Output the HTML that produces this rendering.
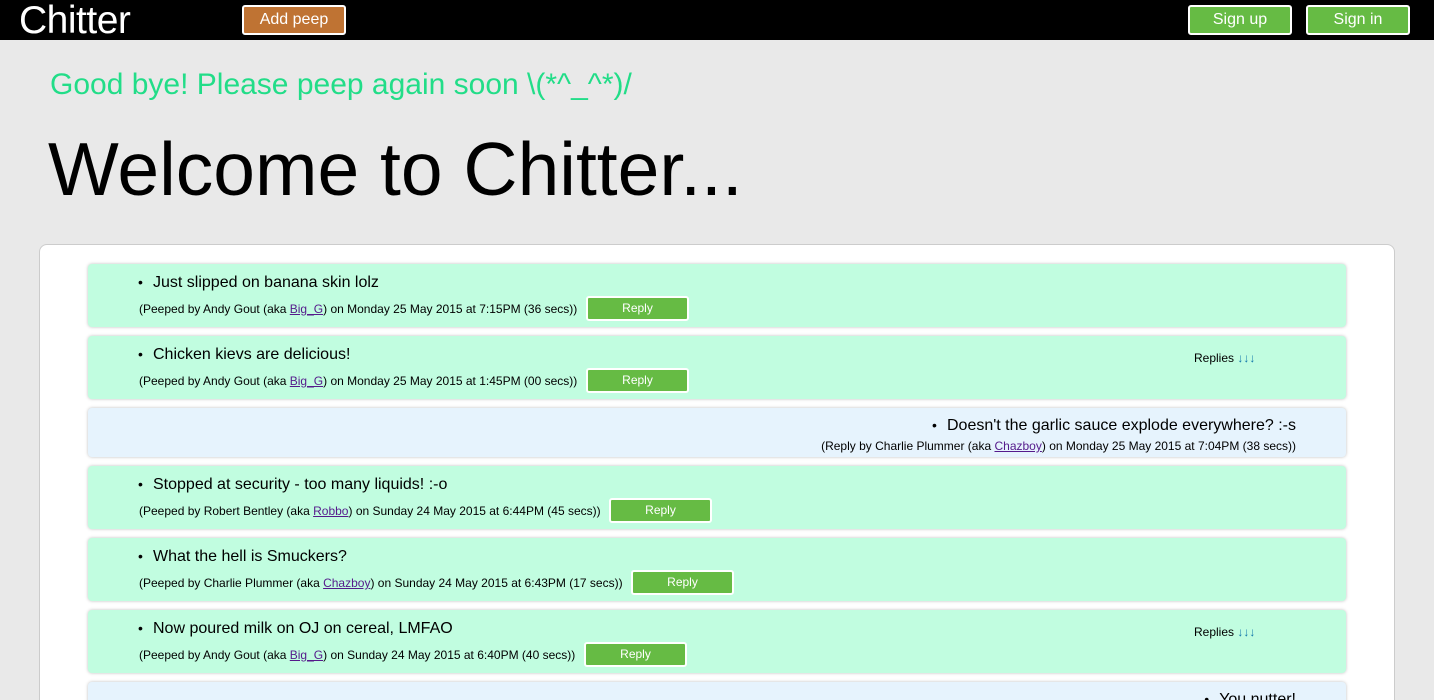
<!DOCTYPE html>
<html style="height:700px;overflow:hidden"><head><meta charset="utf-8"><style>
*{margin:0;padding:0;box-sizing:border-box}
body{width:1434px;height:700px;overflow:hidden;background:#e9e9e9;font-family:"Liberation Sans",Arial,sans-serif;position:relative}
.hdr{position:absolute;left:0;top:0;width:1434px;height:40px;background:#000}
.logo{position:absolute;left:19px;top:-1px;color:#fff;font-size:39px;letter-spacing:-0.5px}
.btn{position:absolute;border:2px solid #fff;border-radius:3px;color:#fff;font-size:16px;text-align:center}
.msg{position:absolute;left:50px;top:68px;font-size:30px;color:#22dd88}
h1{position:absolute;left:48px;top:126px;font-size:75px;font-weight:normal;color:#000}
.box{position:absolute;left:39px;top:244px;width:1356px;height:480px;background:#fff;border-radius:8px;border:1px solid #ccc}
.card{position:absolute;left:88px;width:1258px;background:#c1fde0;border-radius:4px;box-shadow:0 0 3px rgba(0,0,0,.25)}
.rc{background:#e6f3fd}
.t{position:absolute;left:65px;font-size:16px;color:#000;white-space:nowrap}
.t:before{content:"•";position:absolute;left:-15px;font-size:14px}
.m{position:absolute;left:51px;font-size:12px;white-space:nowrap}
.m a,.rm a{color:#551a8b;text-decoration:underline}
.r{position:absolute;width:103px;height:25px;background:#66bb44;border:2px solid #fff;border-radius:3px;color:#fff;font-size:12px;text-align:center;line-height:21px}
.rp{position:absolute;left:1106px;top:15px;font-size:12px}
.rp span{color:#17a}
.rt{position:absolute;right:50px;font-size:16px;white-space:nowrap}
.rt:before{content:"•";position:absolute;left:-15px;font-size:14px}
.rm{position:absolute;right:50px;font-size:12px;white-space:nowrap}
</style></head><body>
<div class="hdr">
<div class="logo">Chitter</div>
<div class="btn" style="left:242px;top:5px;width:104px;height:30px;background:#bf7333;line-height:26px">Add peep</div>
<div class="btn" style="left:1188px;top:5px;width:104px;height:30px;background:#66bb44;line-height:26px">Sign up</div>
<div class="btn" style="left:1306px;top:5px;width:104px;height:30px;background:#66bb44;line-height:26px">Sign in</div>
</div>
<div class="msg">Good bye! Please peep again soon \(*^_^*)/</div>
<h1>Welcome to Chitter...</h1>
<div class="box"></div>

<div class="card" style="top:264px;height:63px">
<div class="t" style="top:10px">Just slipped on banana skin lolz</div>
<div class="m" style="top:38px">(Peeped by Andy Gout (aka <a>Big_G</a>) on Monday 25 May 2015 at 7:15PM (36 secs))</div>
<div class="r" style="left:498px;top:32px">Reply</div>
</div>
<div class="card" style="top:336px;height:63px">
<div class="t" style="top:10px">Chicken kievs are delicious!</div>
<div class="m" style="top:38px">(Peeped by Andy Gout (aka <a>Big_G</a>) on Monday 25 May 2015 at 1:45PM (00 secs))</div>
<div class="r" style="left:498px;top:32px">Reply</div>
<div class="rp">Replies <span>↓↓↓</span></div>
</div>
<div class="card rc" style="top:408px;height:49px">
<div class="rt" style="top:9px">Doesn't the garlic sauce explode everywhere? :-s</div>
<div class="rm" style="top:31px">(Reply by Charlie Plummer (aka <a>Chazboy</a>) on Monday 25 May 2015 at 7:04PM (38 secs))</div>
</div>
<div class="card" style="top:466px;height:63px">
<div class="t" style="top:10px">Stopped at security - too many liquids! :-o</div>
<div class="m" style="top:38px">(Peeped by Robert Bentley (aka <a>Robbo</a>) on Sunday 24 May 2015 at 6:44PM (45 secs))</div>
<div class="r" style="left:521px;top:32px">Reply</div>
</div>
<div class="card" style="top:538px;height:63px">
<div class="t" style="top:10px">What the hell is Smuckers?</div>
<div class="m" style="top:38px">(Peeped by Charlie Plummer (aka <a>Chazboy</a>) on Sunday 24 May 2015 at 6:43PM (17 secs))</div>
<div class="r" style="left:543px;top:32px">Reply</div>
</div>
<div class="card" style="top:610px;height:63px">
<div class="t" style="top:10px">Now poured milk on OJ on cereal, LMFAO</div>
<div class="m" style="top:38px">(Peeped by Andy Gout (aka <a>Big_G</a>) on Sunday 24 May 2015 at 6:40PM (40 secs))</div>
<div class="r" style="left:496px;top:32px">Reply</div>
<div class="rp">Replies <span>↓↓↓</span></div>
</div>
<div class="card rc" style="top:682px;height:49px">
<div class="rt" style="top:9px">You nutter!</div>
</div>
</body></html>
